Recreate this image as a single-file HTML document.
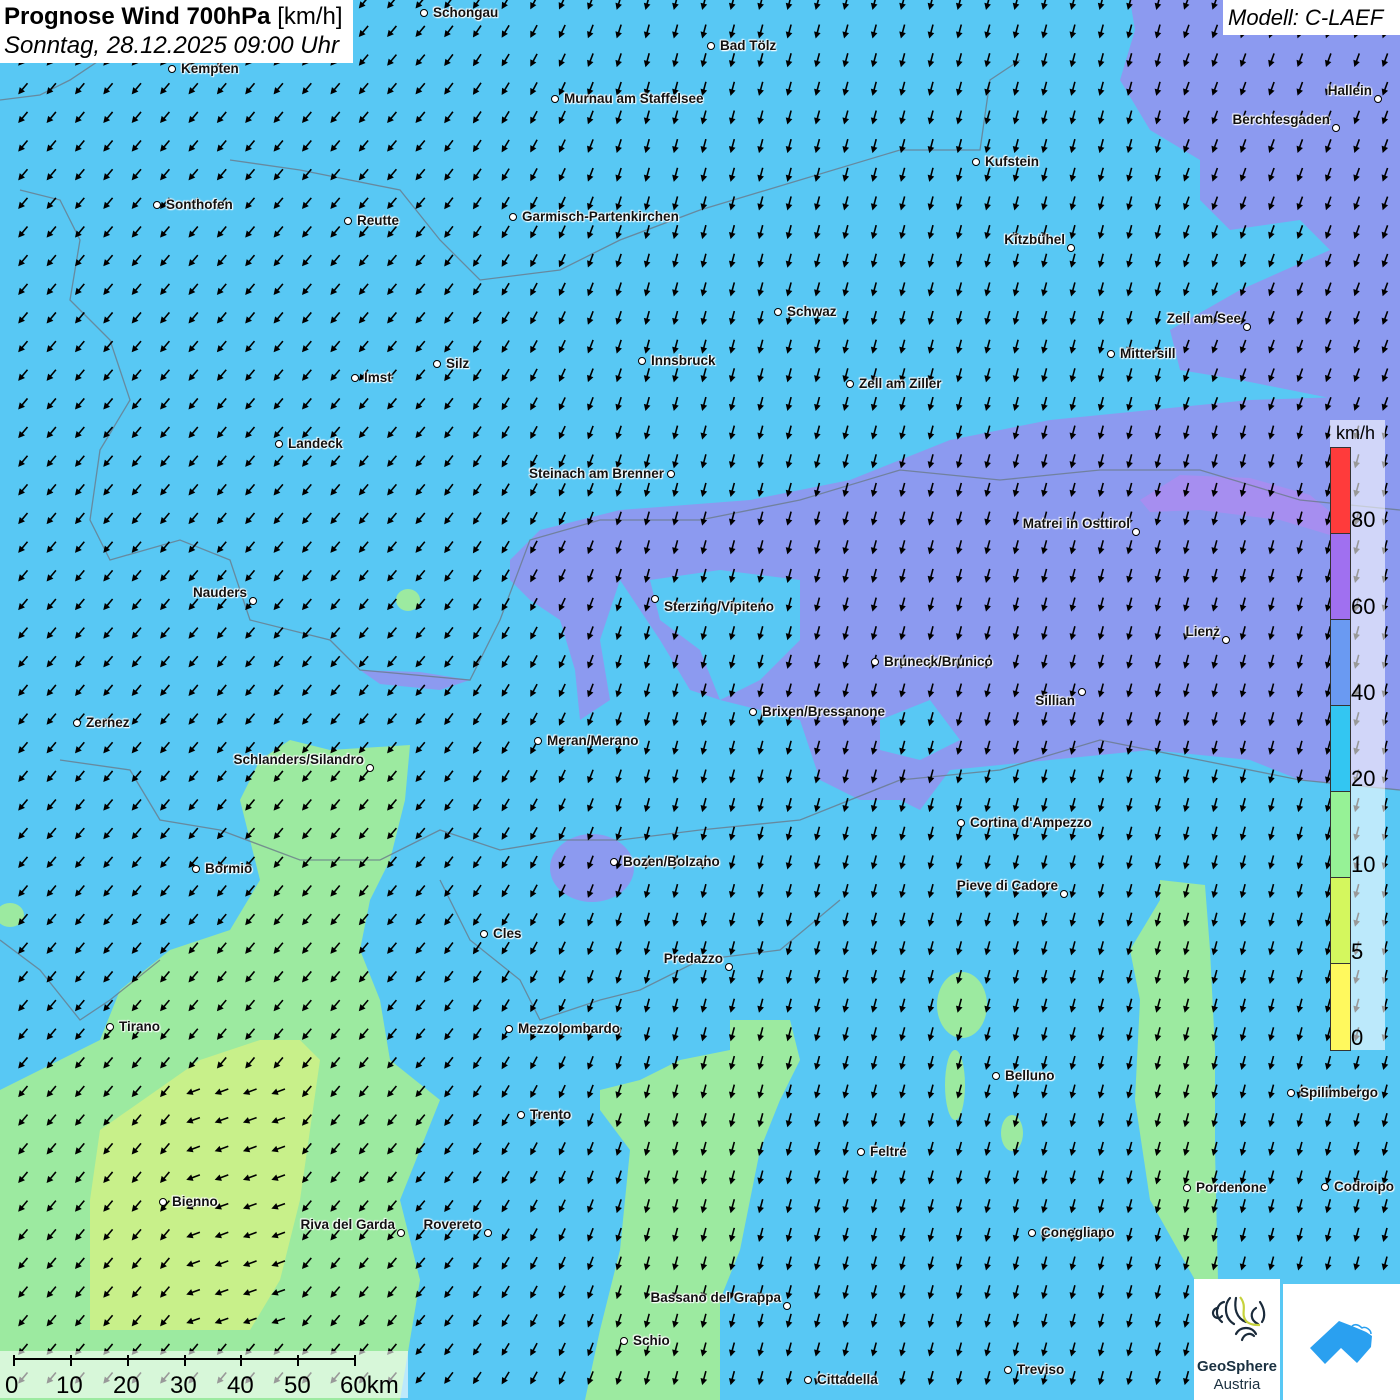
<!DOCTYPE html>
<html><head><meta charset="utf-8">
<style>
html,body{margin:0;padding:0;width:1400px;height:1400px;overflow:hidden;background:#58c8f4;}
#wrap{position:relative;width:1400px;height:1400px;font-family:"Liberation Sans",sans-serif;}
svg{position:absolute;left:0;top:0;}
.c{position:absolute;font-size:13.5px;font-weight:bold;color:#111;white-space:nowrap;text-shadow:0 0 2px #fff,0 0 2px #fff,1px 1px 1px #fff,-1px -1px 1px #fff;line-height:13px;}
.d{position:absolute;width:6px;height:6px;border:1.5px solid #000;border-radius:50%;background:#fff;}
</style></head><body><div id="wrap">
<svg width="1400" height="1400" id="map">
<rect width="1400" height="1400" fill="#58c8f4"/>
<g fill="#8c9af0">
<polygon points="1130,0 1400,0 1400,420 1340,400 1240,380 1180,370 1170,330 1240,290 1330,250 1300,220 1230,230 1200,200 1200,160 1150,130 1120,80 1135,30"/>
<polygon points="510,560 540,530 620,510 750,500 850,480 950,440 1050,420 1150,410 1250,400 1400,395 1400,790 1300,780 1250,760 1150,750 1050,760 950,770 920,810 900,800 860,800 820,780 800,720 760,710 720,700 690,690 660,640 640,610 620,580 600,640 610,700 580,720 575,670 560,620 530,600 510,580"/>
<ellipse cx="592" cy="868" rx="42" ry="34"/>
<polygon points="360,670 420,672 470,680 440,690 380,684"/>
</g>
<polygon fill="#58c8f4" points="650,580 720,570 800,580 800,640 760,680 720,700 700,650 660,620"/>
<polygon fill="#58c8f4" points="880,720 930,700 960,740 920,760 880,750"/>
<polygon fill="#a68ef0" points="1140,500 1180,475 1250,478 1310,495 1340,520 1330,535 1280,520 1200,510 1150,512"/>
<g fill="#9ceaa0">
<polygon points="0,1090 40,1070 100,1040 120,990 170,950 230,930 260,880 240,800 260,760 290,740 330,750 410,745 405,800 390,860 370,900 360,950 380,1000 390,1060 440,1100 420,1150 400,1200 420,1280 400,1400 0,1400"/>
<polygon points="600,1090 640,1080 680,1060 730,1050 730,1020 790,1020 800,1060 780,1100 760,1150 740,1250 720,1300 720,1400 585,1400 600,1330 620,1250 630,1150 600,1110"/>
<polygon points="1130,950 1160,900 1160,880 1205,885 1210,950 1215,1050 1215,1150 1218,1280 1195,1280 1150,1200 1135,1100 1140,1000"/>
<ellipse cx="962" cy="1005" rx="25" ry="33"/>
<ellipse cx="955" cy="1085" rx="10" ry="35"/>
<ellipse cx="1012" cy="1133" rx="11" ry="18"/>
<ellipse cx="408" cy="600" rx="12" ry="11"/>
<ellipse cx="10" cy="915" rx="14" ry="12"/>
</g>
<polygon fill="#c8f08a" points="100,1130 200,1060 260,1040 300,1040 320,1060 300,1200 280,1280 250,1330 90,1330 90,1200"/>
<g fill="none" stroke="#6a7a8a" stroke-width="1.3" opacity="0.8">
<polyline points="0,100 40,95 70,80 100,60 150,40 160,30"/>
<polyline points="20,190 60,200 80,240 70,300 110,340 130,400 100,450 90,520 110,560 180,540 230,560 250,620 330,640 360,670 470,680 500,620 530,540 600,520 700,520 800,500 900,470 1000,480 1100,470 1200,470 1300,500 1400,510"/>
<polyline points="230,160 300,170 400,190 440,240 480,280 560,270 620,240 700,210 800,180 900,150 980,150 990,80 1020,60"/>
<polyline points="60,760 130,770 160,820 220,830 300,860 380,860 440,830 500,850 560,840 620,840 700,830 800,820 900,780 1000,770 1100,740 1200,760 1300,780 1400,790"/>
<polyline points="0,940 40,970 80,1020 110,1000 160,960"/>
<polyline points="440,880 470,940 520,980 540,1020 600,1000 640,990 700,960 780,950 840,900"/>
</g>
<g id="arr"></g>
</svg>

<div style="position:absolute;left:0;top:0;width:353px;height:63px;background:#fff;"></div>
<div style="position:absolute;left:4px;top:3px;font-size:24px;font-weight:bold;color:#000;white-space:nowrap;">Prognose Wind 700hPa <span style="font-weight:normal">[km/h]</span></div>
<div style="position:absolute;left:4px;top:32px;font-size:24px;font-style:italic;color:#000;white-space:nowrap;">Sonntag, 28.12.2025 09:00 Uhr</div>
<div style="position:absolute;left:1223px;top:0;width:177px;height:35px;background:#fff;"></div>
<div style="position:absolute;left:1228px;top:5px;font-size:22px;font-style:italic;color:#000;white-space:nowrap;">Modell: C-LAEF</div>

<div id="cities"></div>

<div style="position:absolute;left:1330px;top:420px;width:55px;height:630px;background:rgba(255,255,255,0.6);"></div>
<div style="position:absolute;left:1336px;top:423px;font-size:18px;color:#000;">km/h</div>
<div style="position:absolute;left:1330px;top:447px;width:19px;border:1px solid #333;">
<div style="height:85px;background:#ff3b3b;border-bottom:1px solid #333"></div>
<div style="height:85px;background:#a070f0;border-bottom:1px solid #333"></div>
<div style="height:85px;background:#6a9af2;border-bottom:1px solid #333"></div>
<div style="height:85px;background:#33c6f2;border-bottom:1px solid #333"></div>
<div style="height:85px;background:#96f296;border-bottom:1px solid #333"></div>
<div style="height:85px;background:#d4f75e;border-bottom:1px solid #333"></div>
<div style="height:86px;background:#fff95e"></div>
</div>
<div style="position:absolute;left:1351px;font-size:22px;color:#000;line-height:22px;">
<div style="position:absolute;top:509px">80</div><div style="position:absolute;top:596px">60</div><div style="position:absolute;top:682px">40</div><div style="position:absolute;top:768px">20</div><div style="position:absolute;top:854px">10</div><div style="position:absolute;top:941px">5</div><div style="position:absolute;top:1027px">0</div>
</div>

<div style="position:absolute;left:0;top:1351px;width:408px;height:47px;background:rgba(255,255,255,0.6);"></div>
<svg width="1400" height="1400" style="pointer-events:none">
<g stroke="#000" stroke-width="2"><line x1="14" y1="1359" x2="355" y2="1359"/>
<line x1="14" y1="1355" x2="14" y2="1366"/><line x1="71" y1="1355" x2="71" y2="1366"/><line x1="128" y1="1355" x2="128" y2="1366"/><line x1="185" y1="1355" x2="185" y2="1366"/><line x1="241" y1="1355" x2="241" y2="1366"/><line x1="298" y1="1355" x2="298" y2="1366"/><line x1="355" y1="1355" x2="355" y2="1366"/></g>
<g font-family="Liberation Sans" font-size="24" fill="#000"><text x="5" y="1393">0</text><text x="56" y="1393">10</text><text x="113" y="1393">20</text><text x="170" y="1393">30</text><text x="227" y="1393">40</text><text x="284" y="1393">50</text><text x="340" y="1393">60km</text></g>
</svg>

<div style="position:absolute;left:1194px;top:1279px;width:86px;height:121px;background:#fff;"></div>
<svg width="1400" height="1400" style="pointer-events:none">
<g fill="none" stroke="#1a2a3a" stroke-width="2.2" stroke-linecap="round">
<path d="M1218,1308 a5,5 0 1 0 4,8"/>
<path d="M1224,1302 c-8,2 -10,14 -2,20"/>
<path d="M1230,1298 c-6,6 -6,20 4,26"/>
<path d="M1236,1298 c-2,10 0,20 10,24"/>
<path d="M1256,1308 c-6,4 -6,12 2,16"/>
<path d="M1260,1302 c4,6 6,14 2,20"/>
<path d="M1242,1340 c2,-6 8,-8 12,-4"/>
<path d="M1236,1334 c4,-8 16,-8 20,0"/>
</g>
<path d="M1240,1297 c8,10 0,16 6,24 c4,4 10,4 14,4" fill="none" stroke="#c6d23c" stroke-width="2.2"/>
<text x="1237" y="1371" text-anchor="middle" font-family="Liberation Sans" font-weight="bold" font-size="15" fill="#1a3040">GeoSphere</text>
<text x="1237" y="1389" text-anchor="middle" font-family="Liberation Sans" font-size="15" fill="#1a3040">Austria</text>
</svg>
<div style="position:absolute;left:1283px;top:1284px;width:117px;height:116px;background:#fff;"></div>
<svg width="1400" height="1400" style="pointer-events:none">
<polygon points="1310,1348 1339,1321 1352,1326 1362,1329 1372,1336 1371,1347 1357,1363 1341,1348 1325,1364" fill="#2aa0f0"/>
<path d="M1352,1326 c4,-3 8,0 10,2 c4,-2 9,2 9,6" fill="#fff" stroke="#2aa0f0" stroke-width="1.5"/>
</svg>

<script>
var g=document.getElementById('arr'),s='';
for(var r=0;r<49;r++){var y=2.7+r*28.65;for(var c=0;c<50;c++){var x=23+c*28.38;
var a;if(x<420)a=40;else if(x<650)a=40-(x-420)/230*25;else a=15;
if(x>1180&&y<420)a=20;
if(x>110&&x<300&&y>1070&&y<1330&&x>180)a=70;
s+='<g transform="translate('+x.toFixed(1)+','+y.toFixed(1)+') rotate('+a.toFixed(0)+')"><line x1="0" y1="-7" x2="0" y2="2" stroke="#000" stroke-width="1.6"/><polygon points="-3.4,1 3.4,1 0,7.5" fill="#000"/></g>';}}
g.innerHTML=s;
var C=[["Schongau",424,13,"R"],["Bad Tölz",711,46,"R"],["Kempten",172,69,"R"],["Murnau am Staffelsee",555,99,"R"],["Hallein",1378,99,"L"],["Berchtesgaden",1336,128,"L"],["Kufstein",976,162,"R"],["Sonthofen",157,205,"R"],["Reutte",348,221,"R"],["Garmisch-Partenkirchen",513,217,"R"],["Kitzbühel",1071,248,"L"],["Schwaz",778,312,"R"],["Zell am See",1247,327,"L"],["Mittersill",1111,354,"R"],["Innsbruck",642,361,"R"],["Silz",437,364,"R"],["Imst",355,378,"R"],["Zell am Ziller",850,384,"R"],["Landeck",279,444,"R"],["Steinach am Brenner",671,474,"LM"],["Matrei in Osttirol",1136,532,"L"],["Nauders",253,601,"L"],["Sterzing/Vipiteno",655,599,"RB"],["Lienz",1226,640,"L"],["Bruneck/Brunico",875,662,"R"],["Sillian",1082,692,"LB"],["Brixen/Bressanone",753,712,"R"],["Zernez",77,723,"R"],["Meran/Merano",538,741,"R"],["Schlanders/Silandro",370,768,"L"],["Cortina d'Ampezzo",961,823,"R"],["Bozen/Bolzano",614,862,"R"],["Bormio",196,869,"R"],["Pieve di Cadore",1064,894,"L"],["Cles",484,934,"R"],["Predazzo",729,967,"L"],["Tirano",110,1027,"R"],["Mezzolombardo",509,1029,"R"],["Belluno",996,1076,"R"],["Spilimbergo",1291,1093,"R"],["Trento",521,1115,"R"],["Feltre",861,1152,"R"],["Pordenone",1187,1188,"R"],["Codroipo",1325,1187,"R"],["Bienno",163,1202,"R"],["Riva del Garda",401,1233,"L"],["Rovereto",488,1233,"L"],["Conegliano",1032,1233,"R"],["Bassano del Grappa",787,1306,"L"],["Schio",624,1341,"R"],["Treviso",1008,1370,"R"],["Cittadella",808,1380,"R"]];
var h='';C.forEach(function(c){var x=c[1],y=c[2],t=c[3];
h+='<div class="d" style="left:'+(x-4.5)+'px;top:'+(y-4.5)+'px"></div>';
if(t=="R")h+='<div class="c" style="left:'+(x+9)+'px;top:'+(y-7)+'px">'+c[0]+'</div>';
else if(t=="RB")h+='<div class="c" style="left:'+(x+9)+'px;top:'+(y+1)+'px">'+c[0]+'</div>';
else if(t=="LM")h+='<div class="c" style="right:'+(1400-x+7)+'px;top:'+(y-7)+'px">'+c[0]+'</div>';
else if(t=="LB")h+='<div class="c" style="right:'+(1400-x+7)+'px;top:'+(y+2)+'px">'+c[0]+'</div>';
else h+='<div class="c" style="right:'+(1400-x+6)+'px;top:'+(y-15)+'px">'+c[0]+'</div>';});
document.getElementById('cities').innerHTML=h;
</script>
</div></body></html>
